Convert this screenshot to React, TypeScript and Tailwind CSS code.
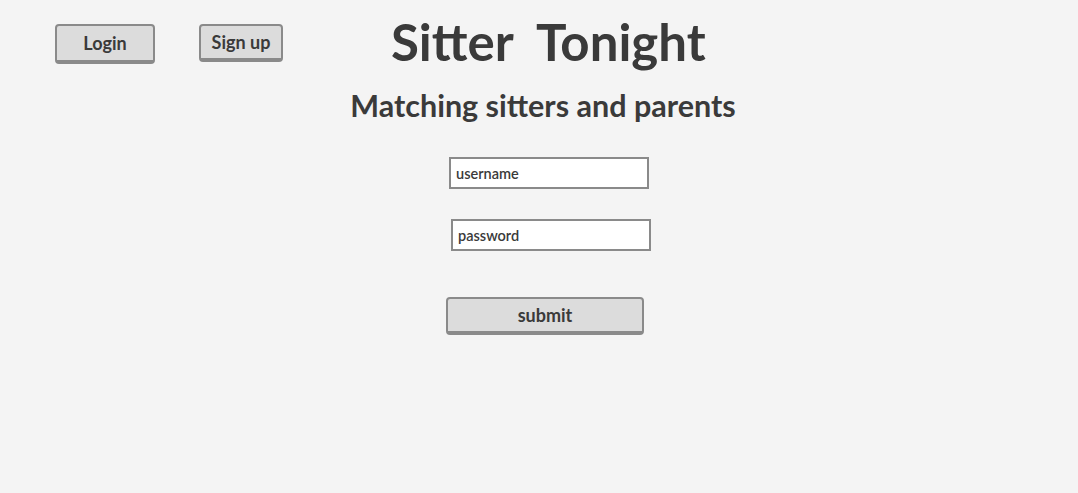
export default function App() {
  const font = { fontFamily: '"Lato", "Open Sans", sans-serif' };
  return (
    <div
      className="w-[1078px] h-[493px] bg-[#f4f4f4] text-[#3a3a3a] overflow-hidden"
      style={font}
    >
      <div className="flex items-start pt-[16px]">
        <button className="ml-[55px] mt-[8px] w-[100px] h-[40px] bg-[#dcdcdc] border-2 border-b-4 border-[#8a8a8a] rounded-[4px] text-[18px] font-bold leading-none">
          Login
        </button>
        <button className="ml-[44px] mt-[8px] w-[84px] h-[38px] bg-[#dcdcdc] border-2 border-b-4 border-[#8a8a8a] rounded-[4px] text-[18px] font-bold leading-none">
          Sign up
        </button>
        <h1 className="ml-[108px] text-[51px] font-bold leading-none whitespace-pre">
          Sitter  Tonight
        </h1>
      </div>

      <h2 className="mt-[23px] pl-[8px] text-center text-[30.5px] font-bold leading-[30px]">
        Matching sitters and parents
      </h2>

      <div className="flex flex-col items-start">
        <input
          className="ml-[449px] mt-[37px] w-[200px] h-[32px] bg-white border-2 border-[#8a8a8a] pl-[5px] text-[14.5px] font-semibold text-[#3a3a3a] outline-none placeholder:text-[#3a3a3a]"
          placeholder="username"
          style={font}
        />
        <input
          type="password"
          className="ml-[451px] mt-[30px] w-[200px] h-[32px] bg-white border-2 border-[#8a8a8a] pl-[5px] text-[14.5px] font-semibold text-[#3a3a3a] outline-none placeholder:text-[#3a3a3a]"
          placeholder="password"
          style={font}
        />
        <button className="ml-[446px] mt-[46px] w-[198px] h-[38px] bg-[#dcdcdc] border-2 border-b-4 border-[#8a8a8a] rounded-[4px] text-[18px] font-bold leading-none">
          submit
        </button>
      </div>
    </div>
  );
}
